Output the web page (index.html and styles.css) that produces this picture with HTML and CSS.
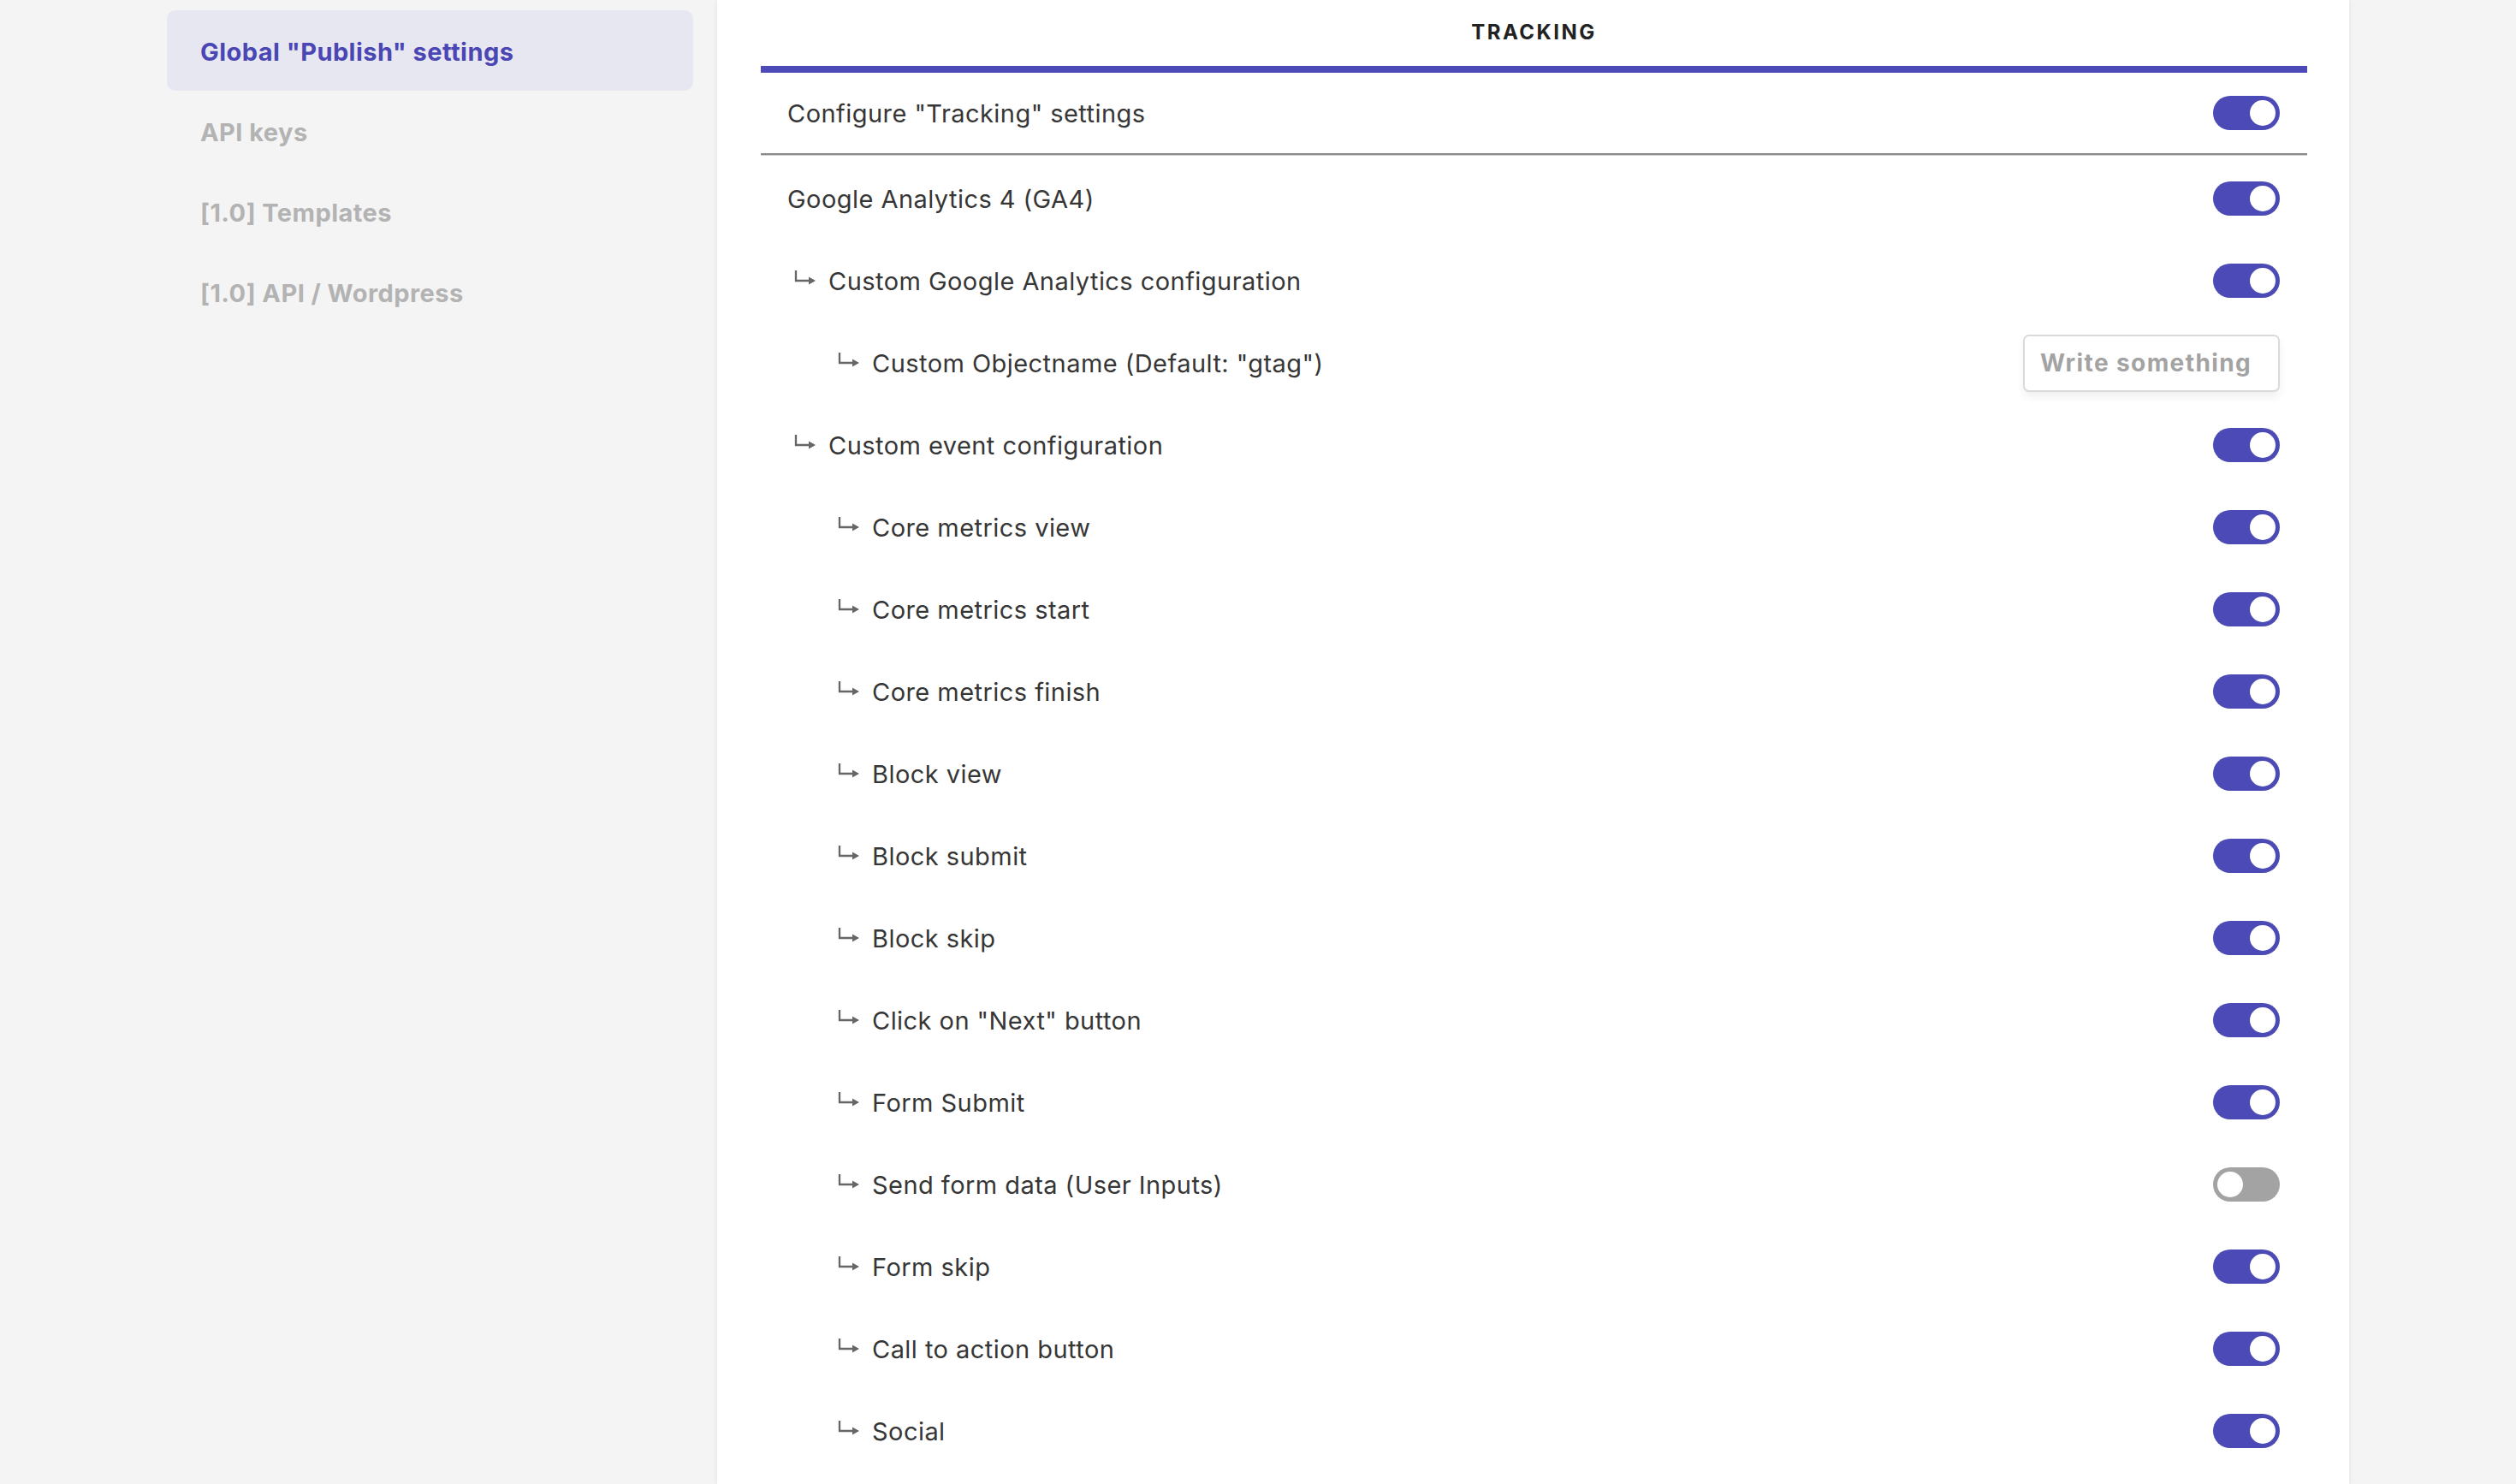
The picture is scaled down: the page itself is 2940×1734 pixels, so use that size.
FILE: index.html
```html
<!DOCTYPE html>
<html>
<head>
<meta charset="utf-8">
<link rel="stylesheet" href="styles.css">
</head>
<body>
<div class="page">
  <nav class="sidebar">
    <div class="nav-item active">Global "Publish" settings</div>
    <div class="nav-item">API keys</div>
    <div class="nav-item">[1.0] Templates</div>
    <div class="nav-item">[1.0] API / Wordpress</div>
  </nav>
  <main class="panel">
    <div class="panel-title">TRACKING</div>
    <div class="list">
      <div class="row head"><span class="label">Configure "Tracking" settings</span><span class="toggle on"></span></div>
      <div class="row"><span class="label">Google Analytics 4 (GA4)</span><span class="toggle on"></span></div>
      <div class="row l1"><span class="label"><svg class="arr" viewBox="0 0 28 20"><path d="M3 1 V13 H19" fill="none" stroke="#666" stroke-width="2.3"/><path d="M18 8.5 L26 13 L18 17.5 Z" fill="#666"/></svg>Custom Google Analytics configuration</span><span class="toggle on"></span></div>
      <div class="row l2"><span class="label"><svg class="arr" viewBox="0 0 28 20"><path d="M3 1 V13 H19" fill="none" stroke="#666" stroke-width="2.3"/><path d="M18 8.5 L26 13 L18 17.5 Z" fill="#666"/></svg>Custom Objectname (Default: "gtag")</span><input class="text-input" type="text" placeholder="Write something"></div>
      <div class="row l1"><span class="label"><svg class="arr" viewBox="0 0 28 20"><path d="M3 1 V13 H19" fill="none" stroke="#666" stroke-width="2.3"/><path d="M18 8.5 L26 13 L18 17.5 Z" fill="#666"/></svg>Custom event configuration</span><span class="toggle on"></span></div>
      <div class="row l2"><span class="label"><svg class="arr" viewBox="0 0 28 20"><path d="M3 1 V13 H19" fill="none" stroke="#666" stroke-width="2.3"/><path d="M18 8.5 L26 13 L18 17.5 Z" fill="#666"/></svg>Core metrics view</span><span class="toggle on"></span></div>
      <div class="row l2"><span class="label"><svg class="arr" viewBox="0 0 28 20"><path d="M3 1 V13 H19" fill="none" stroke="#666" stroke-width="2.3"/><path d="M18 8.5 L26 13 L18 17.5 Z" fill="#666"/></svg>Core metrics start</span><span class="toggle on"></span></div>
      <div class="row l2"><span class="label"><svg class="arr" viewBox="0 0 28 20"><path d="M3 1 V13 H19" fill="none" stroke="#666" stroke-width="2.3"/><path d="M18 8.5 L26 13 L18 17.5 Z" fill="#666"/></svg>Core metrics finish</span><span class="toggle on"></span></div>
      <div class="row l2"><span class="label"><svg class="arr" viewBox="0 0 28 20"><path d="M3 1 V13 H19" fill="none" stroke="#666" stroke-width="2.3"/><path d="M18 8.5 L26 13 L18 17.5 Z" fill="#666"/></svg>Block view</span><span class="toggle on"></span></div>
      <div class="row l2"><span class="label"><svg class="arr" viewBox="0 0 28 20"><path d="M3 1 V13 H19" fill="none" stroke="#666" stroke-width="2.3"/><path d="M18 8.5 L26 13 L18 17.5 Z" fill="#666"/></svg>Block submit</span><span class="toggle on"></span></div>
      <div class="row l2"><span class="label"><svg class="arr" viewBox="0 0 28 20"><path d="M3 1 V13 H19" fill="none" stroke="#666" stroke-width="2.3"/><path d="M18 8.5 L26 13 L18 17.5 Z" fill="#666"/></svg>Block skip</span><span class="toggle on"></span></div>
      <div class="row l2"><span class="label"><svg class="arr" viewBox="0 0 28 20"><path d="M3 1 V13 H19" fill="none" stroke="#666" stroke-width="2.3"/><path d="M18 8.5 L26 13 L18 17.5 Z" fill="#666"/></svg>Click on "Next" button</span><span class="toggle on"></span></div>
      <div class="row l2"><span class="label"><svg class="arr" viewBox="0 0 28 20"><path d="M3 1 V13 H19" fill="none" stroke="#666" stroke-width="2.3"/><path d="M18 8.5 L26 13 L18 17.5 Z" fill="#666"/></svg>Form Submit</span><span class="toggle on"></span></div>
      <div class="row l2"><span class="label"><svg class="arr" viewBox="0 0 28 20"><path d="M3 1 V13 H19" fill="none" stroke="#666" stroke-width="2.3"/><path d="M18 8.5 L26 13 L18 17.5 Z" fill="#666"/></svg>Send form data (User Inputs)</span><span class="toggle"></span></div>
      <div class="row l2"><span class="label"><svg class="arr" viewBox="0 0 28 20"><path d="M3 1 V13 H19" fill="none" stroke="#666" stroke-width="2.3"/><path d="M18 8.5 L26 13 L18 17.5 Z" fill="#666"/></svg>Form skip</span><span class="toggle on"></span></div>
      <div class="row l2"><span class="label"><svg class="arr" viewBox="0 0 28 20"><path d="M3 1 V13 H19" fill="none" stroke="#666" stroke-width="2.3"/><path d="M18 8.5 L26 13 L18 17.5 Z" fill="#666"/></svg>Call to action button</span><span class="toggle on"></span></div>
      <div class="row l2"><span class="label"><svg class="arr" viewBox="0 0 28 20"><path d="M3 1 V13 H19" fill="none" stroke="#666" stroke-width="2.3"/><path d="M18 8.5 L26 13 L18 17.5 Z" fill="#666"/></svg>Social</span><span class="toggle on"></span></div>
    </div>
  </main>
  <div class="gutter"></div>
</div>
</body>
</html>
```

FILE: styles.css
```css
html, body {
  margin: 0;
  padding: 0;
  background: #f4f4f4;
  font-family: Inter, "Noto Sans", sans-serif;
}
.page {
  display: flex;
  align-items: stretch;
  height: 1734px;
  overflow: hidden;
}
.sidebar {
  width: 838px;
  box-sizing: border-box;
  padding: 12px 28px 0 195px;
  display: flex;
  flex-direction: column;
  flex-shrink: 0;
}
.nav-item {
  height: 94px;
  display: flex;
  align-items: center;
  padding-left: 39px;
  padding-top: 2px;
  box-sizing: border-box;
  border-radius: 10px;
  font-size: 29px;
  font-weight: 700;
  color: #b3b3b3;
  letter-spacing: 0.45px;
}
.nav-item.active {
  background: #e7e7f1;
  color: #4a46b4;
}
.panel {
  width: 1907px;
  flex-shrink: 0;
  background: #fff;
  box-sizing: border-box;
  padding: 0 49px 0 51px;
  box-shadow: 0 0 6px rgba(0,0,0,0.08);
}
.panel-title {
  display: flex;
  align-items: center;
  justify-content: center;
  font-size: 24px;
  font-weight: 700;
  letter-spacing: 2.5px;
  color: #222;
  border-bottom: 8px solid #4b4ab6;
  box-sizing: border-box;
  height: 85px;
  padding-bottom: 2px;
}
.row {
  height: 96px;
  display: flex;
  align-items: center;
  justify-content: space-between;
  padding: 2px 32px 0 31px;
  box-sizing: border-box;
  font-size: 29px;
  color: #363636;
  letter-spacing: 0.45px;
}
.row.head {
  border-bottom: 2px solid #8a8a8a;
  box-shadow: 0 1px 0 #d0d0d0;
  padding-top: 0;
  margin-bottom: 2px;
}
.label {
  display: flex;
  align-items: center;
}
.row.l1 .label { padding-left: 7px; }
.row.l2 .label { padding-left: 58px; }
.arr {
  width: 28px;
  height: 20px;
  margin-right: 13px;
  margin-top: -7px;
}
.toggle {
  width: 78px;
  height: 40px;
  border-radius: 20px;
  background: #a3a3a3;
  position: relative;
  flex-shrink: 0;
}
.toggle::after {
  content: "";
  position: absolute;
  top: 5px;
  left: 5px;
  width: 30px;
  height: 30px;
  border-radius: 50%;
  background: #fff;
}
.toggle.on {
  background: #4b4ab6;
}
.toggle.on::after {
  left: auto;
  right: 5px;
}
.text-input {
  width: 300px;
  height: 67px;
  box-sizing: border-box;
  border: 2px solid #dadada;
  border-radius: 7px;
  padding: 0 18px;
  font-family: Inter, "Noto Sans", sans-serif;
  font-size: 28px;
  font-weight: 700;
  letter-spacing: 1.4px;
  color: #333;
  box-shadow: 0 6px 10px rgba(0,0,0,0.06);
  outline: none;
}
.text-input::placeholder {
  color: #a3a3a3;
}
.gutter {
  flex: 1;
}
```
